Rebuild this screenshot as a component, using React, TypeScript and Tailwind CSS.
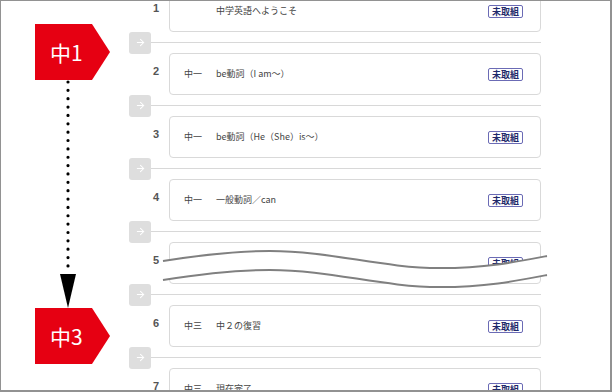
import { ArrowRight } from 'lucide-react';

type Lesson = { n: number; grade: string; title: string };

const LESSONS: Lesson[] = [
  { n: 1, grade: '', title: '中学英語へようこそ' },
  { n: 2, grade: '中一', title: 'be動詞（I am～）' },
  { n: 3, grade: '中一', title: 'be動詞（He（She）is～）' },
  { n: 4, grade: '中一', title: '一般動詞／can' },
  { n: 5, grade: '中二', title: '過去形' },
  { n: 6, grade: '中三', title: '中２の復習' },
  { n: 7, grade: '中三', title: '現在完了' },
];

const JP = { fontFamily: '"Noto Sans CJK JP", "Noto Sans", sans-serif' };

function GradeLabel({ text }: { text: string }) {
  return (
    <div
      className="flex h-[56px] w-[75px] items-center bg-[#e60012] pl-[15px] text-[21px] leading-none text-white [clip-path:polygon(0_0,76%_0,100%_50%,76%_100%,0_100%)]"
      style={JP}
    >
      {text}
    </div>
  );
}

function LessonRow({ lesson }: { lesson: Lesson }) {
  return (
    <>
      <div className="flex h-[42px] shrink-0">
        <div className="w-[22px] shrink-0" />
        <div
          className="w-[18px] shrink-0 pr-[10px] pt-[13px] text-right text-[11px] font-bold leading-none text-[#555]"
          style={{ fontFamily: '"Liberation Sans", Arial, sans-serif' }}
        >
          {lesson.n}
        </div>
        <div
          className="flex flex-1 items-center rounded-[4px] border border-[#d9d9d9] bg-white pl-[14px] pr-[17px] text-[9px] text-[#444]"
          style={JP}
        >
          <span className="w-[32px] shrink-0">{lesson.grade}</span>
          <span>{lesson.title}</span>
          <span className="ml-auto flex h-[13px] items-center rounded-[2px] border border-[#6b6bb5] px-[3px] text-[9px] font-bold leading-none text-[#1f2a6b]">
            未取組
          </span>
        </div>
      </div>
      <div className="flex h-[21px] shrink-0 items-center">
        <div className="flex h-[22px] w-[22px] shrink-0 items-center justify-center rounded-[3px] bg-[#dedede]">
          <ArrowRight size={11} strokeWidth={2.2} className="text-white" />
        </div>
        <div className="h-px flex-1 bg-[#d8d8d8]" />
      </div>
    </>
  );
}

export default function App() {
  const l1 = 'M162,260 C200,254 235,250 269,250 C330,250 380,267 439,267 C485,267 515,261 546,255';
  const l2 = 'M162,279 C200,273 235,269 269,269 C330,269 380,286 439,286 C485,286 515,280 546,274';
  const fill =
    l1 +
    ' L546,274 C515,280 485,286 439,286 C380,286 330,269 269,269 C235,269 200,273 162,279 Z';

  return (
    <div className="relative flex h-[392px] w-[612px] overflow-hidden border-b-2 border-l border-r-2 border-t border-[#929292] bg-white">
      {/* grade labels + connector */}
      <div className="flex w-[128px] shrink-0 flex-col pl-[34px] pt-[23px]">
        <GradeLabel text="中1" />
        <svg width="20" height="228" className="ml-[23px] shrink-0">
          <line
            x1="10"
            y1="2"
            x2="10"
            y2="186"
            stroke="#000"
            strokeWidth="3.2"
            strokeLinecap="round"
            strokeDasharray="0 8.36"
          />
          <polygon points="2,194 18,194 10,228" fill="#000" />
        </svg>
        <GradeLabel text="中3" />
      </div>

      {/* lesson list */}
      <div className="mt-[-11px] flex w-[412px] shrink-0 flex-col">
        {LESSONS.map((l) => (
          <LessonRow key={l.n} lesson={l} />
        ))}
      </div>

      {/* omission wave */}
      <svg width="609" height="389" className="pointer-events-none absolute left-0 top-0">
        <path d={fill} fill="#fff" />
        <path d={l1} fill="none" stroke="#808080" strokeWidth="2" />
        <path d={l2} fill="none" stroke="#808080" strokeWidth="2" />
      </svg>
    </div>
  );
}
